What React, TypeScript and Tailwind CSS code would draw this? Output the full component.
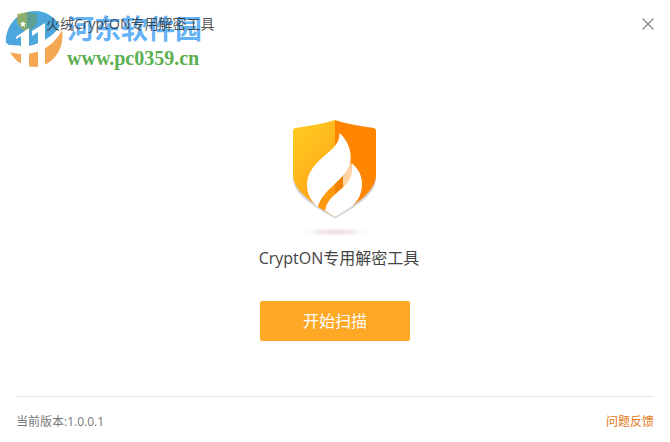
function ShieldLogo() {
  return (
    <svg viewBox="0 0 110 130" className="block h-[130px] w-[110px]" aria-hidden="true">
      <defs>
        <linearGradient id="shieldLeft" x1="0" y1="0" x2="0.5" y2="1">
          <stop offset="0" stopColor="#ffcd1f" />
          <stop offset="0.5" stopColor="#ffb91d" />
          <stop offset="1" stopColor="#ff9c14" />
        </linearGradient>
        <radialGradient id="floorShadow">
          <stop offset="0" stopColor="#eadede" />
          <stop offset="0.5" stopColor="#f6eeee" />
          <stop offset="1" stopColor="#ffffff" stopOpacity="0" />
        </radialGradient>
      </defs>
      <ellipse cx="55" cy="122" rx="38" ry="5" fill="url(#floorShadow)" />
      <path d="M13 62V68C13 84 34 97 55 108.500C76 97 96 84 96 68V62" fill="#d2d3d8" />
      <path d="M55 10C42 14 29 16 15 18Q13 18.500 13 20.500V66C14 82 34 94 55 107Z" fill="url(#shieldLeft)" />
      <path d="M55 10C67 14 80 16 94 18Q96 18.500 96 20.500V66C95 82 76 94 55 107Z" fill="#ff8500" />
      <path d="M59.500 23C64 27 68 33 69.500 39C71 45 71 50 70 54C69 59 66 63 63 66L54 75C46 82 40 89 38 97C31 91 27 84 27 75C27 64 33 56 42 48C51 40 60 34 59.500 23Z" fill="#fff" />
      <path d="M71.500 53C79 59 82 66 82 74C82 86 76 94 68 99L55 107L45 100.500C46 94 49 90 53 86L63 77C69 71 73 64 71.500 53Z" fill="#fff" />
      <path d="M38 97C40 89 46 82 54 75L64 65V76L53 86C49 90 46 94 45 101Z" fill="#ff9a10" />
      <path d="M55 74L64 65V76L55 84Z" fill="#f28300" />
      <path d="M70 54Q68 60 63 66V77Q72 70 72 59L71.500 53Z" fill="#ffd5a5" />
    </svg>
  );
}

function MiniShield() {
  return (
    <svg viewBox="0 0 20 22" className="h-[22px] w-5 shrink-0" aria-hidden="true">
      <path d="M10 0L0 2V12Q1 17 10 22Z" fill="#c9c75b" />
      <path d="M10 0L20 2V12Q19 17 10 22Z" fill="#a5a75c" />
    </svg>
  );
}

function SiteEmblem() {
  return (
    <svg viewBox="0 0 58 58" className="block size-[58px]" aria-hidden="true">
      <path d="M1 36C-1 17 12 1 30 1C41 1 50 7 55 16C47 28 33 36 20 36C12 36 6 34 1 36Z" fill="#4da6dc" />
      <path d="M12 4L22 2V22Q13 18 12 11Z" fill="#9caf55" opacity="0.8" />
      <path d="M22 2L32 4V11Q31 18 22 22Z" fill="#5f9d84" opacity="0.8" />
      <path d="M18 11L19 13L21 13L19.500 14.500L20 17L18 15.800L16 17L16.500 14.500L15 13L17 13Z" fill="#fff" />
      <path d="M5 42C24 47 46 38 57 20C60 38 49 55 31 57C20 57 10 52 5 42Z" fill="#f5a753" />
      <path d="M0 31C5 39 20 40 34 33C45 28 52 22 55 16L57 20C48 38 27 49 5 42Q1 37 0 31Z" fill="#fff" />
      <path d="M11 27L24 18V57H16V26L11 29Z" fill="#fff" />
      <path d="M27 21L40 13V58H33V22L27 26Z" fill="#fff" />
    </svg>
  );
}

function Watermark() {
  return (
    <div className="pointer-events-none absolute top-2.5 left-[5px] flex items-start gap-1">
      <SiteEmblem />
      <div className="flex flex-col">
        <span className="font-['Noto_Sans_CJK_SC',sans-serif] text-[27px] leading-9 font-bold text-[#48a5f5]/85">河东软件园</span>
        <span className="font-['Liberation_Serif',serif] text-xl leading-6 font-bold text-[#5bb052]">www.pc0359.cn</span>
      </div>
    </div>
  );
}

export default function App() {
  return (
    <div className="relative flex min-h-screen flex-col bg-white font-['Open_Sans','Noto_Sans_CJK_SC',sans-serif] text-[#444]">
      <header className="flex h-12 items-center justify-between pr-4 pl-[18px]">
        <div className="flex items-center gap-2">
          <MiniShield />
          <span className="relative z-10 text-sm text-[#333]/85">火绒CryptON专用解密工具</span>
        </div>
        <button type="button" aria-label="关闭" className="flex size-3 items-center justify-center text-[#858585]">
          <svg viewBox="0 0 12 12" className="size-3" fill="none" stroke="currentColor" strokeWidth="1.2" aria-hidden="true">
            <path d="M.5 .5L11.500 11.500M11.500 .5L.5 11.500" />
          </svg>
        </button>
      </header>

      <main className="flex flex-1 flex-col items-center pt-[62px]">
        <ShieldLogo />
        <h1 className="mt-1.5 ml-2 text-base leading-6">CryptON专用解密工具</h1>
        <button type="button" className="mt-[31px] h-10 w-[150px] rounded-xs bg-[#ffa826] text-base text-white">
          开始扫描
        </button>
      </main>

      <footer className="mx-4 flex h-[46px] items-center justify-between border-t border-[#e6e6e6] pt-1 text-xs text-[#777]">
        <span>当前版本:1.0.0.1</span>
        <a href="#feedback" className="text-[#e67817]">问题反馈</a>
      </footer>
      <Watermark />
    </div>
  );
}
